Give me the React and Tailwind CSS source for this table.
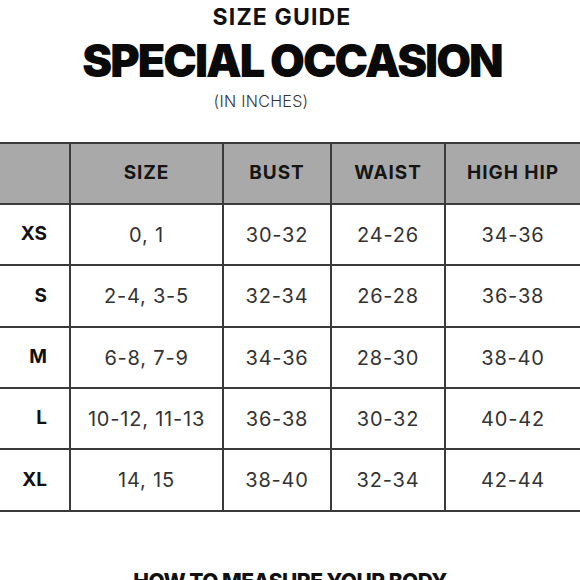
import React from 'react'

const COLS = ['w-[71px]', 'w-[153px]', 'w-[108px]', 'w-[114px]', 'w-[136px]']

const ROWS = [
  { label: 'XS', size: '0, 1', bust: '30-32', waist: '24-26', hip: '34-36', h: 'h-[61px]' },
  { label: 'S', size: '2-4, 3-5', bust: '32-34', waist: '26-28', hip: '36-38', h: 'h-[62px]' },
  { label: 'M', size: '6-8, 7-9', bust: '34-36', waist: '28-30', hip: '38-40', h: 'h-[61px]' },
  { label: 'L', size: '10-12, 11-13', bust: '36-38', waist: '30-32', hip: '40-42', h: 'h-[61px]' },
  { label: 'XL', size: '14, 15', bust: '38-40', waist: '32-34', hip: '42-44', h: 'h-[62px]' },
]

const font = { fontFamily: 'Inter, "Noto Sans", sans-serif' }

function Cell({ w, children, className = 'justify-center' }) {
  return (
    <div className={`${w} shrink-0 flex items-center border-r-2 border-[#3a3a3a] ${className}`}>
      {children}
    </div>
  )
}

export default function App() {
  return (
    <div className="w-[580px] h-[580px] overflow-hidden bg-white text-black" style={font}>
      {/* titles */}
      <div className="flex flex-col items-center pt-[4px]">
        <p className="text-[23px] font-bold leading-[26px] tracking-[0.05em] text-[#111] pr-[16px]">SIZE GUIDE</p>
        <h1 className="text-[45px] font-black leading-[56px] tracking-[-0.045em] text-[#0a0a0a] mt-[3px] pl-[4px]">SPECIAL OCCASION</h1>
        <p className="text-[16px] font-light leading-[20px] tracking-[0.02em] text-[#333] mt-[2px] pr-[58px]">(IN INCHES)</p>
      </div>

      {/* table */}
      <div className="mt-[31px] w-[584px] border-t-2 border-[#3a3a3a]">
        <div className="flex h-[61px] bg-[#a9a9a9] border-b-2 border-[#3a3a3a] text-[19px] font-bold text-[#151515] tracking-[0.05em]">
          <Cell w={COLS[0]} />
          <Cell w={COLS[1]}>SIZE</Cell>
          <Cell w={COLS[2]}>BUST</Cell>
          <Cell w={COLS[3]}>WAIST</Cell>
          <Cell w={COLS[4]}>HIGH HIP</Cell>
        </div>
        {ROWS.map(r => (
          <div key={r.label} className={`flex ${r.h} border-b-2 border-[#3a3a3a] text-[20px] tracking-[0.04em] text-[#333]`}>
            <Cell w={COLS[0]} className="justify-end pr-[22px] font-bold text-[#111] text-[19px] tracking-normal">{r.label}</Cell>
            <Cell w={COLS[1]}>{r.size}</Cell>
            <Cell w={COLS[2]}>{r.bust}</Cell>
            <Cell w={COLS[3]}>{r.waist}</Cell>
            <Cell w={COLS[4]}>{r.hip}</Cell>
          </div>
        ))}
      </div>

      <p className="mt-[58px] text-center text-[21px] font-extrabold tracking-tight text-[#111] leading-[24px]">HOW TO MEASURE YOUR BODY</p>
    </div>
  )
}
